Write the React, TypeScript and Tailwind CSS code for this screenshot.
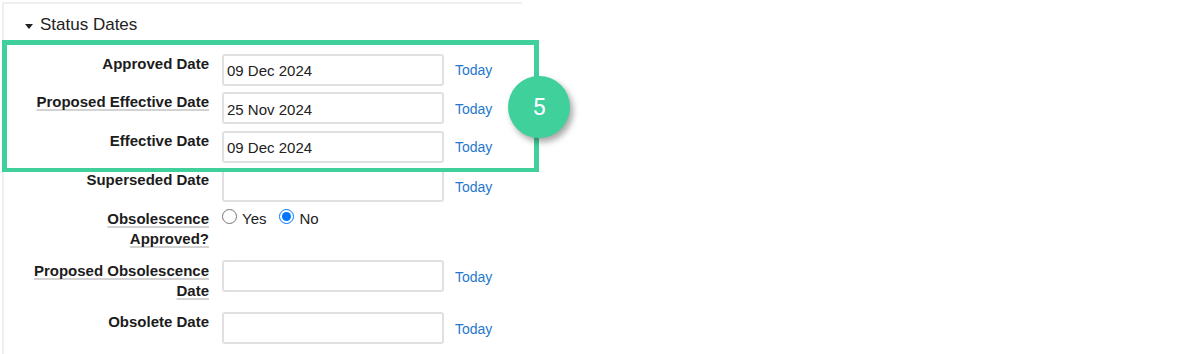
import React from 'react';

const font = "font-['Liberation_Sans',Arial,sans-serif]";

type Row = { label: string; value?: string; underline?: boolean };

const DateField: React.FC<{ row: Row; className?: string; labelClass?: string }> = ({ row, className = '', labelClass = '' }) => (
  <div className={`flex items-start ${className}`}>
    <div className={`w-[205px] shrink-0 text-right text-[15px] leading-[20px] font-bold text-[#1c1c1c] ${labelClass}`}>
      <span className={row.underline ? 'underline decoration-[#d2d2d2] decoration-2 underline-offset-[2px] [text-decoration-skip-ink:none]' : ''}>
        {row.label}
      </span>
    </div>
    <input
      type="text"
      readOnly
      defaultValue={row.value ?? ''}
      className="ml-[13px] h-[32px] w-[222px] rounded-[3px] border-2 border-[#e0e0e0] bg-white px-[3px] pt-[2px] text-[15px] text-[#222] outline-none"
    />
    <a className="ml-[11px] flex h-[32px] items-center pt-[2px] text-[14px] text-[#2677cc] cursor-pointer">Today</a>
  </div>
);

export default function App() {
  return (
    <div className={`relative h-[354px] w-[1200px] overflow-hidden bg-white ${font}`}>
      <div className="ml-[2px] mt-[2px] w-[520px] border-l-2 border-t-2 border-[#efefef] pb-4">
        {/* section heading */}
        <div className="mt-[9px] flex h-[24px] items-center pl-[21px] text-[17px] text-[#222]">
          <span className="mt-[3px] h-0 w-0 border-l-[4px] border-r-[4px] border-t-[5px] border-l-transparent border-r-transparent border-t-[#222]" />
          <span className="ml-[7px]">Status Dates</span>
        </div>

        <div className="mt-[16.5px] flex flex-col">
          <DateField row={{ label: 'Approved Date', value: '09 Dec 2024' }} />
          <DateField row={{ label: 'Proposed Effective Date', value: '25 Nov 2024', underline: true }} className="mt-[6.5px]" />
          <DateField row={{ label: 'Effective Date', value: '09 Dec 2024' }} className="mt-[6.5px]" />
          <DateField row={{ label: 'Superseded Date' }} className="mt-[7.5px]" />

          {/* radio row */}
          <div className="mt-[7px] flex items-start">
            <div className="w-[205px] shrink-0 text-right text-[15px] font-bold leading-[20px] text-[#1c1c1c]">
              <span className="underline decoration-[#d2d2d2] decoration-2 underline-offset-[2px] [text-decoration-skip-ink:none]">
                Obsolescence
                <br />
                Approved?
              </span>
            </div>
            <label className="ml-[13px] flex items-start text-[15px] leading-[20px] text-[#222]">
              <input type="radio" name="obs" className="m-0 mt-[0px] h-[15px] w-[15px]" />
              <span className="ml-[5px]">Yes</span>
            </label>
            <label className="ml-[13px] flex items-start text-[15px] leading-[20px] text-[#222]">
              <input type="radio" name="obs" defaultChecked className="m-0 mt-[0px] h-[15px] w-[15px]" />
              <span className="ml-[5px]">No</span>
            </label>
          </div>

          <DateField
            row={{ label: 'Proposed Obsolescence Date', underline: true }}
            className="mt-[11px]"
            labelClass="pt-[1px]"
          />
          <DateField row={{ label: 'Obsolete Date' }} className="mt-[11px]" />
        </div>
      </div>

      {/* annotation overlay */}
      <div className="pointer-events-none absolute left-[2px] top-[40px] h-[132px] w-[537px] border-[5px] border-b-4 border-[#3fd09c]" />
      <div className="absolute left-[508px] top-[76px] flex h-[62px] w-[62px] items-center justify-center rounded-full bg-[#3fd09c] text-[24px] text-white shadow-[3px_4px_6px_rgba(0,0,0,0.35)] font-['Roboto',sans-serif]">
        5
      </div>
    </div>
  );
}
